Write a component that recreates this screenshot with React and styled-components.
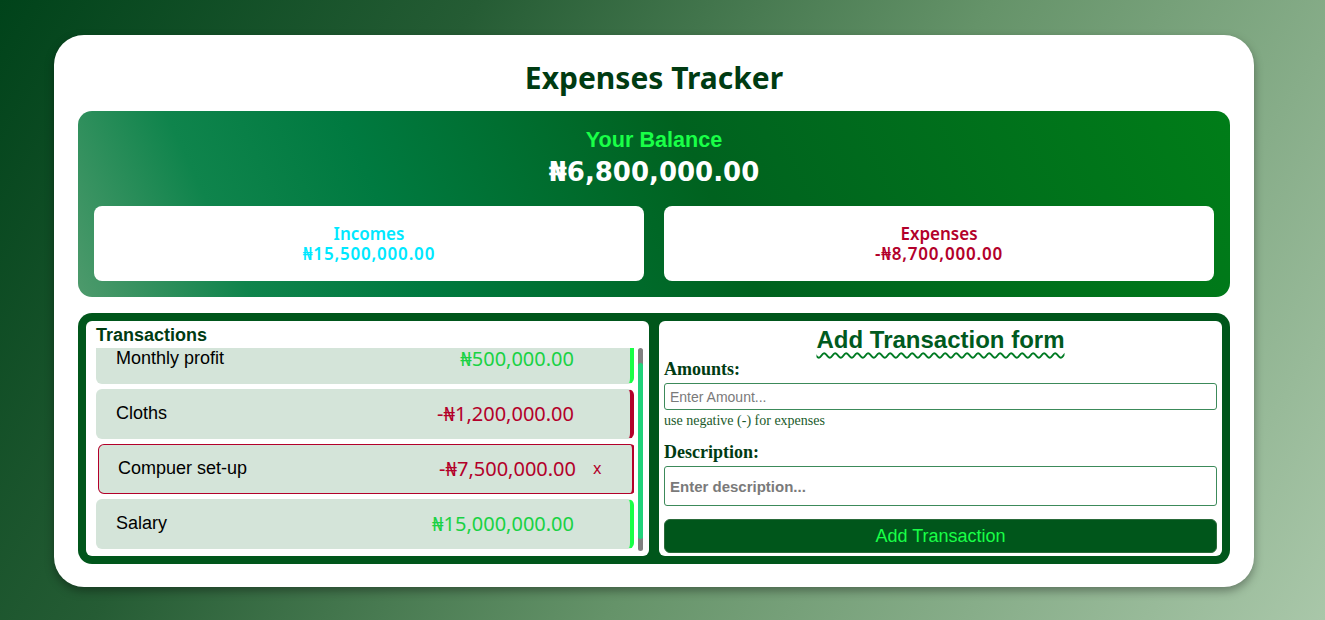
import React, { useEffect, useRef } from "react";
import styled, { createGlobalStyle } from "styled-components";

const GlobalStyle = createGlobalStyle`
  html, body {
    margin: 0;
    padding: 0;
  }
  body {
    min-height: 100vh;
    background: linear-gradient(122deg, #00431a 0%, #255c34 28%, #659369 58%, #a9c7a9 100%);
    font-family: "Liberation Sans", Arial, sans-serif;
  }
`;

const Page = styled.div`
  padding: 35px 0 33px 54px;
`;

const Card = styled.div`
  width: 1200px;
  height: 552px;
  box-sizing: border-box;
  background: #ffffff;
  border-radius: 30px;
  box-shadow: 0 4px 10px rgba(0, 0, 0, 0.35);
  padding: 19px 24px 23px;
  display: flex;
  flex-direction: column;
`;

const Title = styled.h1`
  margin: 0 0 9px;
  text-align: center;
  font-family: "Noto Sans", "Open Sans", sans-serif;
  font-weight: 700;
  font-size: 30px;
  line-height: 48px;
  color: #003b12;
`;

const BalancePanel = styled.div`
  border-radius: 14px;
  padding: 16px 16px 16px;
  background: linear-gradient(65deg, #4e9a6c 0%, #0f844c 14%, #007a40 28%, #00621f 55%, #007d18 100%);
  display: flex;
  flex-direction: column;
  align-items: center;
`;

const BalanceLabel = styled.div`
  font-family: "Liberation Sans", Arial, sans-serif;
  font-weight: 700;
  font-size: 21.6px;
  line-height: 26px;
  color: #19ff47;
`;

const BalanceValue = styled.div`
  font-family: "DejaVu Sans", Verdana, sans-serif;
  font-weight: 700;
  font-size: 26px;
  line-height: 38px;
  color: #ffffff;
  margin-bottom: 15px;
`;

const Summary = styled.div`
  display: grid;
  grid-template-columns: 1fr 1fr;
  gap: 20px;
  width: 100%;
`;

const SummaryCard = styled.div`
  background: #ffffff;
  border-radius: 8px;
  height: 75px;
  display: flex;
  flex-direction: column;
  align-items: center;
  justify-content: center;
  font-family: "Noto Sans", "Open Sans", sans-serif;
  font-weight: 600;
  font-size: 17px;
  line-height: 20px;
  color: ${({ tone }) => (tone === "out" ? "#b3002a" : "#00e8ff")};
  box-sizing: border-box;
`;

const SummaryAmount = styled.div`
  letter-spacing: 0.8px;
`;

const Lower = styled.div`
  margin-top: 16px;
  flex: 1;
  min-height: 0;
  background: #00561b;
  border-radius: 14px;
  padding: 8px;
  display: grid;
  grid-template-columns: 1fr 1fr;
  gap: 10px;
`;

const Box = styled.div`
  background: #ffffff;
  border-radius: 6px;
  min-height: 0;
  display: flex;
  flex-direction: column;
  box-sizing: border-box;
  padding: ${({ pad }) => pad};
`;

const ListTitle = styled.h3`
  margin: 0;
  font-size: 18px;
  font-weight: 700;
  line-height: 26px;
  color: #003b12;
`;

const ListArea = styled.div`
  flex: 1;
  min-height: 0;
  display: flex;
  gap: 4px;
`;

const List = styled.div`
  flex: 1;
  min-height: 0;
  overflow: hidden;
  padding: 3px 0 18px;
  display: flex;
  flex-direction: column;
  gap: 5px;
`;

const ScrollTrack = styled.div`
  width: 5px;
  background: #808080;
  border-radius: 3px;
  padding-top: 15px;
  box-sizing: border-box;
`;

const ScrollThumb = styled.div`
  height: 176px;
  background: #20d27a;
  border-radius: 3px;
`;

const Item = styled.div`
  flex: 0 0 50px;
  box-sizing: border-box;
  margin-right: ${({ active }) => (active ? "-2px" : "0")};
  margin-left: ${({ active }) => (active ? "2px" : "0")};
  background: #d4e4d9;
  border-radius: 6px;
  border: 1px solid ${({ active }) => (active ? "#b3002a" : "transparent")};
  border-right: 4px solid ${({ kind }) => (kind === "out" ? "#b3002a" : "#19ff47")};
  display: flex;
  align-items: center;
  padding: 0 0 2px 19px;
`;

const Name = styled.span`
  flex: 1;
  font-size: 18px;
  color: #000000;
`;

const Amount = styled.span`
  font-family: "Noto Sans", "Open Sans", sans-serif;
  font-size: 20px;
  color: ${({ kind }) => (kind === "out" ? "#b3002a" : "#19d244")};
`;

const Delete = styled.button`
  width: 56px;
  border: none;
  background: none;
  padding: 0 0 0 17px;
  text-align: left;
  font-family: "Noto Sans", sans-serif;
  font-size: 16px;
  color: #b3002a;
  visibility: ${({ show }) => (show ? "visible" : "hidden")};
  cursor: pointer;
`;

const FormTitle = styled.h2`
  margin: 0;
  text-align: center;
  font-size: 24px;
  line-height: 32px;
  font-weight: 700;
  color: #005a1e;
  text-decoration: underline wavy #007a22;
  text-decoration-thickness: 1.5px;
  text-underline-offset: 4px;
`;

const Label = styled.label`
  font-family: "Liberation Serif", "Times New Roman", serif;
  font-weight: 700;
  font-size: 18px;
  line-height: 22px;
  color: #003b12;
  margin-top: ${({ top }) => top || "2px"};
  margin-bottom: 3px;
`;

const Input = styled.input`
  box-sizing: border-box;
  width: 100%;
  height: ${({ tall }) => (tall ? "40px" : "27px")};
  border: 1px solid #3c8a5a;
  border-radius: 3px;
  padding: 0 5px;
  font-family: "Liberation Sans", Arial, sans-serif;
  font-size: ${({ tall }) => (tall ? "15px" : "14px")};
  font-weight: ${({ tall }) => (tall ? 700 : 400)};
  outline: none;
  caret-color: #000;

  &::placeholder {
    color: #7a7a7a;
  }
`;

const Hint = styled.div`
  font-family: "Liberation Serif", "Times New Roman", serif;
  font-size: 14px;
  line-height: 20px;
  margin-top: 1px;
  color: #1a5a2a;
`;

const Submit = styled.button`
  margin-top: 13px;
  height: 34px;
  width: 100%;
  border: 1px solid #2a6a3a;
  border-radius: 6px;
  background: #00561b;
  color: #19ff47;
  font-family: "Liberation Sans", Arial, sans-serif;
  font-size: 18px;
  cursor: pointer;
`;

const transactions = [
  { id: 1, text: "Monthly profit", amount: 500000 },
  { id: 2, text: "Cloths", amount: -1200000 },
  { id: 3, text: "Compuer set-up", amount: -7500000 },
  { id: 4, text: "Salary", amount: 15000000 },
];

const money = (n) => {
  const s = Math.abs(n).toLocaleString("en-US", {
    minimumFractionDigits: 2,
    maximumFractionDigits: 2,
  });
  return `${n < 0 ? "-" : ""}₦${s}`;
};

const App = () => {
  const listRef = useRef(null);
  const descRef = useRef(null);

  const income = transactions.filter((t) => t.amount > 0).reduce((a, t) => a + t.amount, 0);
  const expense = transactions.filter((t) => t.amount < 0).reduce((a, t) => a + t.amount, 0);

  useEffect(() => {
    // list is shown scrolled a little, as in the design
    if (listRef.current) listRef.current.scrollTop = 17;
    if (descRef.current) descRef.current.focus();
  }, []);

  return (
    <>
      <GlobalStyle />
      <Page>
        <Card>
          <Title>Expenses Tracker</Title>
          <BalancePanel>
            <BalanceLabel>Your Balance</BalanceLabel>
            <BalanceValue>{money(income + expense)}</BalanceValue>
            <Summary>
              <SummaryCard>
                <div>Incomes</div>
                <SummaryAmount>{money(income)}</SummaryAmount>
              </SummaryCard>
              <SummaryCard tone="out">
                <div>Expenses</div>
                <SummaryAmount>{money(expense)}</SummaryAmount>
              </SummaryCard>
            </Summary>
          </BalancePanel>
          <Lower>
            <Box pad="1px 6px 5px 10px">
              <ListTitle>Transactions</ListTitle>
              <ListArea>
                <List ref={listRef}>
                  {transactions.map((t) => {
                    const kind = t.amount < 0 ? "out" : "in";
                    const active = t.id === 3;
                    return (
                      <Item key={t.id} kind={kind} active={active}>
                        <Name>{t.text}</Name>
                        <Amount kind={kind}>{money(t.amount)}</Amount>
                        <Delete show={active}>x</Delete>
                      </Item>
                    );
                  })}
                </List>
                <ScrollTrack>
                  <ScrollThumb />
                </ScrollTrack>
              </ListArea>
            </Box>
            <Box pad="3px 5px 3px 5px">
              <FormTitle>Add Transaction form</FormTitle>
              <Label>Amounts:</Label>
              <Input placeholder="Enter Amount..." />
              <Hint>use negative (-) for expenses</Hint>
              <Label top="10px">Description:</Label>
              <Input tall ref={descRef} placeholder="Enter description..." />
              <Submit>Add Transaction</Submit>
            </Box>
          </Lower>
        </Card>
      </Page>
    </>
  );
};

export default App;
